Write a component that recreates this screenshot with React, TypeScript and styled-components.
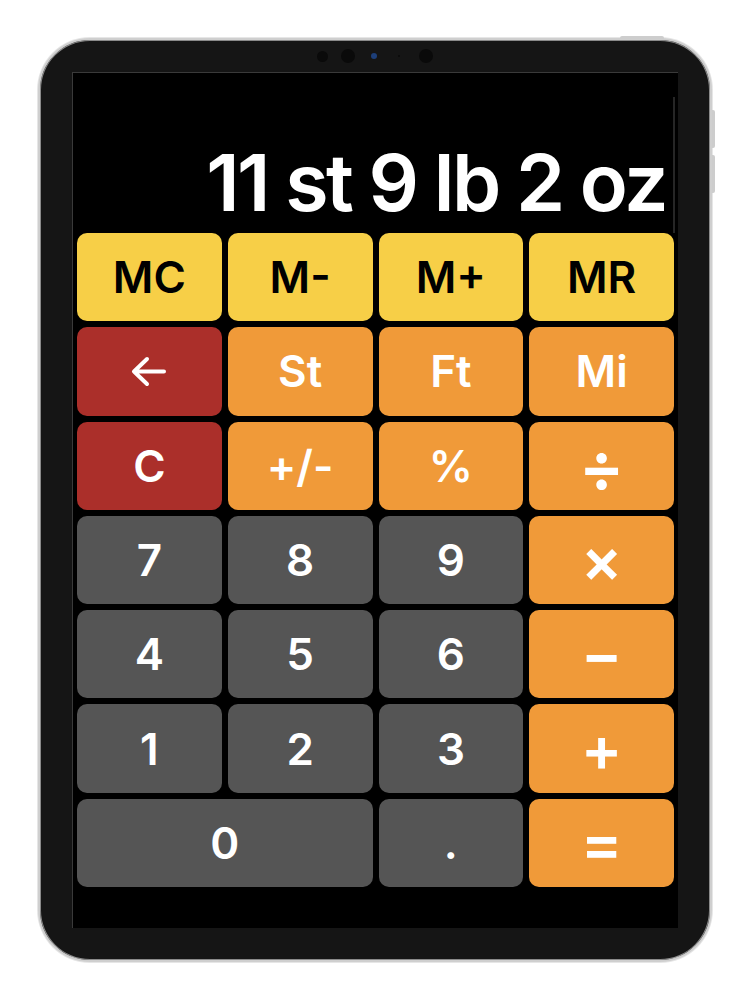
import React from "react";
import styled, { createGlobalStyle } from "styled-components";

const GlobalStyle = createGlobalStyle`
  html, body {
    margin: 0;
    padding: 0;
    background: #ffffff;
  }
  * {
    box-sizing: border-box;
  }
`;

type Tone = "memory" | "clear" | "unit" | "digit";

const tones: Record<Tone, { bg: string; fg: string }> = {
  memory: { bg: "#f7cf47", fg: "#000000" },
  clear: { bg: "#ab2f2a", fg: "#ffffff" },
  unit: { bg: "#f09a39", fg: "#ffffff" },
  digit: { bg: "#555555", fg: "#ffffff" },
};

const Page = styled.div`
  width: 750px;
  height: 1000px;
  display: flex;
  align-items: center;
  justify-content: center;
`;

const Device = styled.div`
  position: relative;
  width: 674px;
  height: 924px;
  border-radius: 52px;
  border: 2px solid #cfcfcf;
  background: #151515;
  box-shadow: 0 0 0 1px #e6e6e6, inset 0 0 0 1px #8a8a8a;
  padding: 0 32px 32px;
  display: flex;
  flex-direction: column;
`;

const TopButton = styled.div`
  position: absolute;
  top: -4px;
  left: 580px;
  width: 44px;
  height: 3px;
  border-radius: 2px 2px 0 0;
  background: #cdcdcd;
`;

const SideButton = styled.div<{ $top: number }>`
  position: absolute;
  right: -5px;
  top: ${(p) => p.$top}px;
  width: 3px;
  height: 38px;
  border-radius: 0 2px 2px 0;
  background: #cdcdcd;
`;

const CameraBar = styled.div`
  height: 32px;
  display: flex;
  align-items: center;
  justify-content: center;
`;

const Lens = styled.span<{ $size: number; $gap: number; $blue?: boolean }>`
  width: ${(p) => p.$size}px;
  height: ${(p) => p.$size}px;
  margin-left: ${(p) => p.$gap}px;
  border-radius: 50%;
  background: ${(p) => (p.$blue ? "#1d3f7a" : "#0a0a0a")};
`;

const Screen = styled.div`
  position: relative;
  flex: 1;
  background: #000000;
  border-top: 1px solid #3a3a3a;
  border-left: 1px solid #3a3a3a;
  display: flex;
  flex-direction: column;
  padding: 0 4px 41px 4px;
`;

const ScrollHint = styled.div`
  position: absolute;
  right: 3px;
  top: 24px;
  width: 2px;
  height: 136px;
  background: #262626;
`;

const Display = styled.div`
  height: 160px;
  display: flex;
  align-items: flex-end;
  justify-content: flex-end;
  padding: 0 8px 11px 0;
`;

const Readout = styled.div`
  font-family: Inter, "Liberation Sans", sans-serif;
  font-weight: 600;
  font-size: 79px;
  line-height: 1;
  letter-spacing: -2.6px;
  color: #ffffff;
  white-space: nowrap;
`;

const Keypad = styled.div`
  flex: 1;
  display: grid;
  grid-template-columns: repeat(4, 1fr);
  grid-template-rows: repeat(7, 1fr);
  gap: 6px;
`;

const Key = styled.button<{ $tone: Tone; $span?: number; $size?: number }>`
  grid-column: span ${(p) => p.$span ?? 1};
  border: none;
  border-radius: 10px;
  background: ${(p) => tones[p.$tone].bg};
  color: ${(p) => tones[p.$tone].fg};
  font-family: Inter, "Liberation Sans", sans-serif;
  font-weight: 600;
  font-size: ${(p) => p.$size ?? 44}px;
  line-height: 1;
  display: flex;
  align-items: center;
  justify-content: center;
  padding: 0;
`;

const BackArrow = () => (
  <svg width="38" height="31" viewBox="0 0 38 31" fill="none">
    <path
      d="M4 15.5H34M17 3L4 15.5L17 28"
      stroke="#ffffff"
      strokeWidth="4"
      strokeLinecap="round"
      strokeLinejoin="round"
    />
  </svg>
);

type KeyDef = { label: React.ReactNode; tone: Tone; span?: number; size?: number };

const keys: KeyDef[] = [
  { label: "MC", tone: "memory" },
  { label: "M-", tone: "memory" },
  { label: "M+", tone: "memory" },
  { label: "MR", tone: "memory" },
  { label: <BackArrow />, tone: "clear" },
  { label: "St", tone: "unit" },
  { label: "Ft", tone: "unit" },
  { label: "Mi", tone: "unit" },
  { label: "C", tone: "clear" },
  { label: "+/-", tone: "unit" },
  { label: "%", tone: "unit" },
  { label: "÷", tone: "unit", size: 68 },
  { label: "7", tone: "digit" },
  { label: "8", tone: "digit" },
  { label: "9", tone: "digit" },
  { label: "×", tone: "unit", size: 62 },
  { label: "4", tone: "digit" },
  { label: "5", tone: "digit" },
  { label: "6", tone: "digit" },
  { label: "−", tone: "unit", size: 62 },
  { label: "1", tone: "digit" },
  { label: "2", tone: "digit" },
  { label: "3", tone: "digit" },
  { label: "+", tone: "unit", size: 62 },
  { label: "0", tone: "digit", span: 2 },
  { label: ".", tone: "digit" },
  { label: "=", tone: "unit", size: 62 },
];

const App: React.FC = () => {
  return (
    <Page>
      <GlobalStyle />
      <Device>
        <TopButton />
        <SideButton $top={70} />
        <SideButton $top={115} />
        <CameraBar>
          <Lens $size={11} $gap={0} />
          <Lens $size={14} $gap={13} />
          <Lens $size={6} $gap={16} $blue />
          <Lens $size={2} $gap={21} />
          <Lens $size={14} $gap={19} />
        </CameraBar>
        <Screen>
          <ScrollHint />
          <Display>
            <Readout>11 st 9 lb 2 oz</Readout>
          </Display>
          <Keypad>
            {keys.map((k, i) => (
              <Key key={i} $tone={k.tone} $span={k.span} $size={k.size}>
                {k.label}
              </Key>
            ))}
          </Keypad>
        </Screen>
      </Device>
    </Page>
  );
};

export default App;
